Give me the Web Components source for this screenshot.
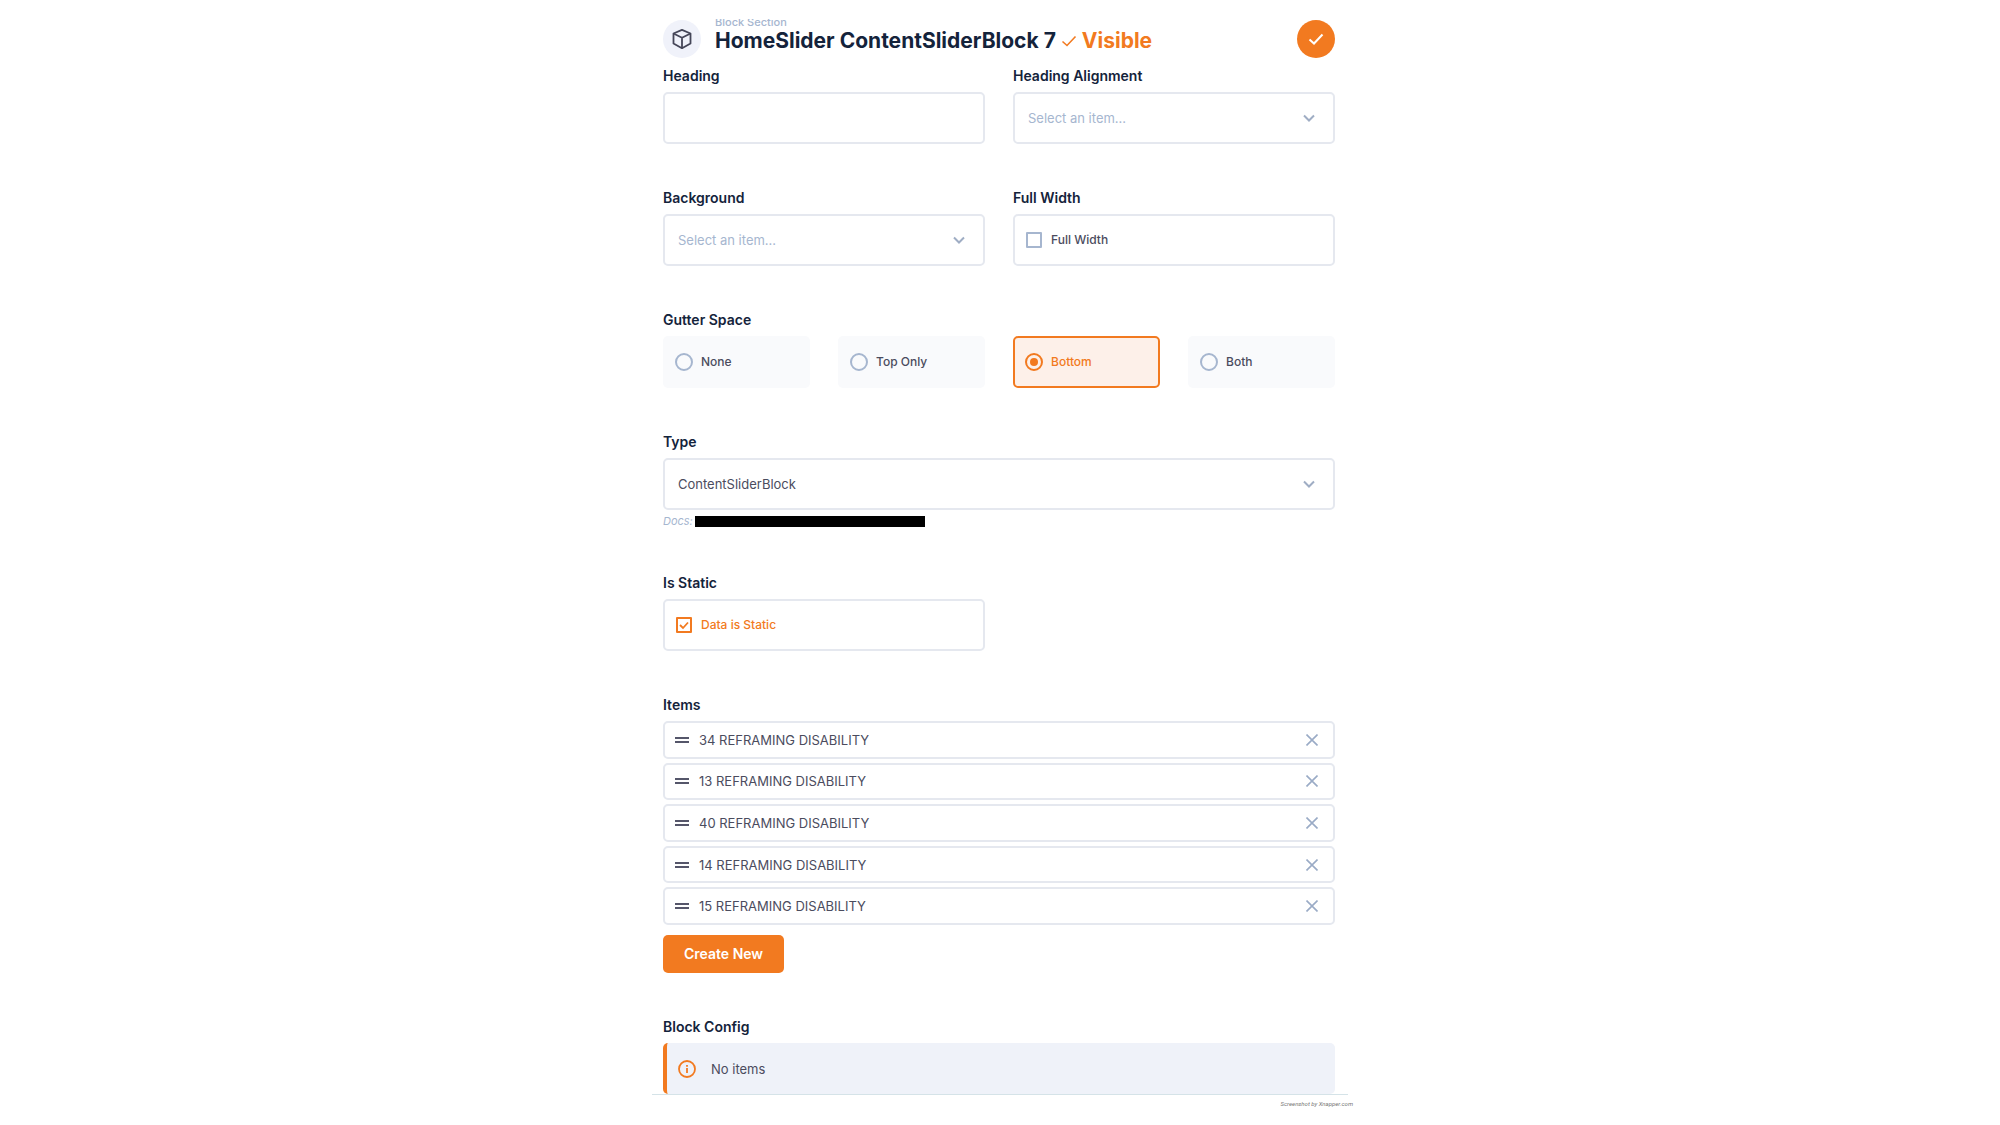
<!DOCTYPE html>
<html lang="en">
<head>
<meta charset="utf-8">
<title>HomeSlider ContentSliderBlock 7</title>
<style>
  :root {
    --accent: #f27a20;
    --accent-soft: #fdf0e9;
    --ink: #14233b;
    --text: #4b4c5e;
    --muted: #a6b6cf;
    --line: #e5e8ef;
    --panel: #eff2f9;
  }
  body {
    margin: 0;
    background: #fff;
    color: var(--text);
    font-family: Inter, "Liberation Sans", sans-serif;
    font-size: 13px;
    line-height: 18px;
  }
</style>
</head>
<body>
<block-editor>
  <block-header slot="header" eyebrow="Block Section" heading="HomeSlider ContentSliderBlock 7" status="Visible"></block-header>

  <form-row cols="2">
    <text-field label="Heading"></text-field>
    <select-field label="Heading Alignment" placeholder="Select an item..."></select-field>
  </form-row>

  <form-row cols="2">
    <select-field label="Background" placeholder="Select an item..."></select-field>
    <check-field label="Full Width" text="Full Width"></check-field>
  </form-row>

  <radio-field label="Gutter Space" name="gutter" options="None,Top Only,Bottom,Both" value="Bottom"></radio-field>

  <select-field label="Type" value="ContentSliderBlock"><doc-note slot="note"></doc-note></select-field>

  <form-row cols="2">
    <check-field label="Is Static" text="Data is Static" checked></check-field>
  </form-row>

  <item-list label="Items">
    <list-item>34 REFRAMING DISABILITY</list-item>
    <list-item>13 REFRAMING DISABILITY</list-item>
    <list-item>40 REFRAMING DISABILITY</list-item>
    <list-item>14 REFRAMING DISABILITY</list-item>
    <list-item>15 REFRAMING DISABILITY</list-item>
  </item-list>

  <info-notice label="Block Config">No items</info-notice>

  <span slot="credit">Screenshot by Xnapper.com</span>
</block-editor>

<script>
(() => {
  // Shared by every field: reset, label type and the bordered box.
  const BASE = `
    :host { display: block; min-width: 0; }
    * { box-sizing: border-box; }
    svg { display: block; flex: none; fill: none; stroke: currentColor; }
    button, input, select { font: inherit; color: inherit; margin: 0; }
    fieldset { border: 0; margin: 0; padding: 0; min-width: 0; }
    legend { padding: 0; }
    .label { display: block; margin: 0 0 7px; color: var(--ink);
      font-size: 14px; line-height: 18px; font-weight: 600; }
    .box { display: flex; align-items: center; width: 100%; height: 52px;
      border: 2px solid var(--line); border-radius: 5px; background: #fff; }
  `;

  const define = (name, render) => customElements.define(name, class extends HTMLElement {
    connectedCallback() {
      if (this.shadowRoot) return;
      this.attachShadow({ mode: 'open' });
      this.shadowRoot.innerHTML = render(this);
    }
  });
  const attr = (el, name) => el.getAttribute(name) || '';

  define('block-editor', () => `<style>${BASE}
      :host { display: flex; flex-direction: column; height: 100vh; padding-top: 19px;
        box-sizing: border-box; overflow: hidden; }
      main { flex: 1; min-height: 0; overflow: hidden; width: 100%; max-width: 696px;
        margin: 0 auto; padding: 1px 13px 0 11px; border-bottom: 1px solid #d5e3e8; }
      .fields { display: flex; flex-direction: column; gap: 45px; padding-top: 9px; }
      footer { width: 100%; max-width: 706px; height: 30px; margin: 0 auto; padding-top: 4px;
        text-align: right; color: #777; font-size: 6px; line-height: 10px; font-style: italic;
        font-family: Roboto, "Liberation Sans", sans-serif; }
    </style>
    <main><slot name="header"></slot><div class="fields"><slot></slot></div></main>
    <footer><slot name="credit"></slot></footer>`);

  define('block-header', (el) => `<style>${BASE}
      header { display: flex; align-items: flex-start; height: 38px; }
      .badge, button { display: grid; place-items: center; flex: none;
        width: 38px; height: 38px; border-radius: 50%; }
      .badge { background: #f0f2fa; color: #454658; }
      .titles { flex: 1; min-width: 0; margin: -4px 14px 0; }
      p { margin: 0; font-size: 11px; line-height: 12px; font-weight: 500; color: var(--muted); }
      h1 { display: flex; align-items: center; gap: 5px; margin: 0; color: var(--ink);
        font-size: 21px; line-height: 26px; font-weight: 700; white-space: nowrap; }
      .status { display: flex; align-items: center; gap: 5px; color: var(--accent); }
      button { border: 0; padding: 0; background: var(--accent); color: #fff; }
    </style>
    <header>
      <span class="badge"><svg width="22" height="22" viewBox="0 0 22 22" stroke-width="1.8" stroke-linejoin="round">
        <path d="M11 1.800l8.500 3.700v10L11 20.200l-8.500-4.700v-10z"/><path d="M2.500 5.500l8.500 4.200 8.500-4.200M11 9.700v10.500"/></svg></span>
      <div class="titles">
        <p>${attr(el, 'eyebrow')}</p>
        <h1>${attr(el, 'heading')}
          <span class="status"><svg width="16" height="16" viewBox="0 0 16 16" stroke-width="1.6"><path d="M1.500 8.500l4.500 4L14.500 3.500"/></svg>${attr(el, 'status')}</span></h1>
      </div>
      <button type="button" aria-label="Save"><svg width="16" height="16" viewBox="0 0 16 16" stroke-width="2"><path d="M1.500 8.500l4.500 4L14.500 3.500"/></svg></button>
    </header>`);

  define('form-row', (el) => `<style>
      :host { display: grid; grid-template-columns: repeat(${attr(el, 'cols')}, minmax(0, 1fr)); gap: 28px; }
    </style><slot></slot>`);

  define('text-field', (el) => `<style>${BASE}
      input { padding: 0 13px; outline-color: var(--accent); }
    </style>
    <label class="label" for="control">${attr(el, 'label')}</label>
    <input class="box" id="control" type="text">`);

  define('select-field', (el) => `<style>${BASE}
      .wrap { display: grid; align-items: center; }
      .wrap > * { grid-area: 1 / 1; }
      select { appearance: none; padding: 0 44px 0 13px; outline-color: var(--accent); }
      select.empty { color: var(--muted); }
      svg { justify-self: end; margin-right: 20px; color: #9fadc4; pointer-events: none; }
    </style>
    <label class="label" for="control">${attr(el, 'label')}</label>
    <div class="wrap">
      <select class="box ${el.hasAttribute('value') ? '' : 'empty'}" id="control">
        <option>${attr(el, 'value') || attr(el, 'placeholder')}</option>
      </select>
      <svg width="12" height="12" viewBox="0 0 12 12" stroke-width="2"><path d="M1 3.500l5 5 5-5"/></svg>
    </div>
    <slot name="note"></slot>`);

  define('doc-note', () => `<style>${BASE}
      :host { display: flex; align-items: center; gap: 2px; padding-top: 3px; }
      em { color: var(--muted); font-size: 11px; line-height: 16px; }
      .bar { width: 230px; height: 11px; background: #000; }
    </style><em>Docs:</em><span class="bar"></span>`);

  define('check-field', (el) => `<style>${BASE}
      .box { gap: 9px; padding-left: 11px; font-size: 12px; font-weight: 500; }
      .box:has(:checked) { color: var(--accent); }
      .tick { display: grid; place-items: center; width: 16px; height: 16px; }
      .tick > * { grid-area: 1 / 1; }
      input { appearance: none; width: 16px; height: 16px; border: 2px solid var(--muted); border-radius: 1px; }
      input:checked { border-color: var(--accent); }
      input:not(:checked) + svg { display: none; }
      svg { pointer-events: none; }
    </style>
    <fieldset>
      <legend class="label">${attr(el, 'label')}</legend>
      <label class="box"><span class="tick">
        <input type="checkbox" ${el.hasAttribute('checked') ? 'checked' : ''}>
        <svg width="10" height="10" viewBox="0 0 10 10" stroke-width="1.8"><path d="M1 5l3 3 5-5.500"/></svg>
      </span>${attr(el, 'text')}</label>
    </fieldset>`);

  define('radio-field', (el) => `<style>${BASE}
      .options { display: grid; grid-template-columns: repeat(4, minmax(0, 1fr)); gap: 28px; }
      .box { gap: 8px; padding-left: 10px; border-color: transparent; background: #f9fafc;
        font-size: 12px; font-weight: 500; }
      .box:has(:checked) { color: var(--accent); border-color: var(--accent); background: var(--accent-soft); }
      input { appearance: none; width: 18px; height: 18px; border: 2px solid var(--muted); border-radius: 50%; }
      input:checked { border-color: var(--accent); padding: 3px; background: var(--accent) content-box; }
    </style>
    <fieldset>
      <legend class="label">${attr(el, 'label')}</legend>
      <div class="options">${attr(el, 'options').split(',').map((o) => `
        <label class="box"><input type="radio" name="${attr(el, 'name')}" ${o === attr(el, 'value') ? 'checked' : ''}>${o}</label>`).join('')}
      </div>
    </fieldset>`);

  define('item-list', (el) => `<style>${BASE}
      .items { display: grid; grid-auto-rows: 1fr; gap: 4px; min-height: 204px; margin-bottom: 10px; }
      button { height: 38px; padding: 0 21px; border: 0; border-radius: 5px;
        background: var(--accent); color: #fff; font-size: 14px; font-weight: 600; }
    </style>
    <div class="label" id="label">${attr(el, 'label')}</div>
    <div class="items" role="list" aria-labelledby="label"><slot></slot></div>
    <button type="button">Create New</button>`);

  define('list-item', () => `<style>${BASE}
      .box { height: 100%; min-height: 36px; padding: 0 15px 0 10px; gap: 10px; }
      .text { flex: 1; }
      .grip { color: #55566a; }
      button { border: 0; padding: 0; background: none; color: #9aabc6; }
    </style>
    <div class="box" role="listitem">
      <svg class="grip" width="14" height="8" viewBox="0 0 14 8" stroke-width="2"><path d="M0 2h14M0 6h14"/></svg>
      <span class="text"><slot></slot></span>
      <button type="button" aria-label="Remove"><svg width="12" height="12" viewBox="0 0 12 12" stroke-width="1.6"><path d="M0.500 0.500l11 11M11.500 0.500l-11 11"/></svg></button>
    </div>`);

  define('info-notice', (el) => `<style>${BASE}
      .notice { display: flex; align-items: center; gap: 15px; height: 51px; padding-left: 11px;
        border-left: 4px solid var(--accent); border-radius: 5px; background: var(--panel); }
      svg { color: var(--accent); }
    </style>
    <div class="label">${attr(el, 'label')}</div>
    <div class="notice">
      <svg width="18" height="18" viewBox="0 0 18 18" stroke-width="1.800"><circle cx="9" cy="9" r="8"/><path d="M9 8v5M9 5v1.800"/></svg>
      <span><slot></slot></span>
    </div>`);
})();
</script>
</body>
</html>
